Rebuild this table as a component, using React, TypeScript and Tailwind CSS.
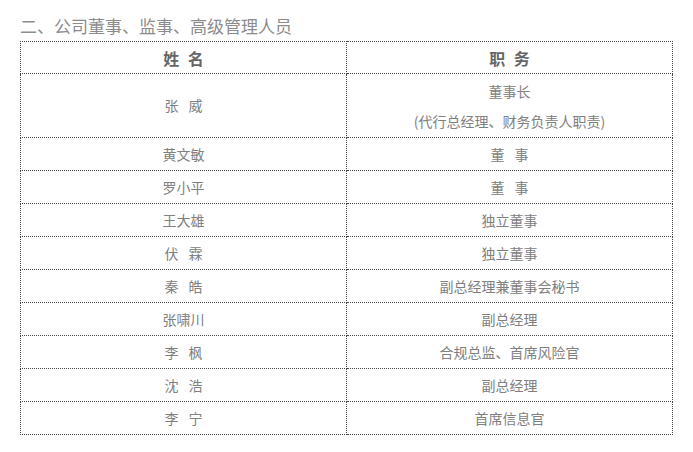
import React from "react";

const rows: [string, string][] = [
  ["黄文敏", "董 事"],
  ["罗小平", "董 事"],
  ["王大雄", "独立董事"],
  ["伏 霖", "独立董事"],
  ["秦 皓", "副总经理兼董事会秘书"],
  ["张啸川", "副总经理"],
  ["李 枫", "合规总监、首席风险官"],
  ["沈 浩", "副总经理"],
  ["李 宁", "首席信息官"],
];

const cell =
  "border border-dotted border-[#444] text-[14px] text-[#808080] p-0 whitespace-pre [word-spacing:7px]";

export default function App() {
  return (
    <div
      className="w-[693px] h-[452px] bg-white px-[20px] pt-[14px]"
      style={{ fontFamily: '"Noto Sans CJK SC", "Noto Sans", sans-serif' }}
    >
      <div className="text-[17px] leading-[24px] text-[#8c8c8c] mb-[3px]">
        二、公司董事、监事、高级管理人员
      </div>
      <table className="w-[652px] border-collapse table-fixed text-center">
        <tbody>
          <tr className="h-[32px]">
            <td className="w-[326px] border border-dotted border-[#444] text-[16px] font-bold text-[#666] p-0 leading-none [word-spacing:5px]">
              姓 名
            </td>
            <td className="w-[326px] border border-dotted border-[#444] text-[16px] font-bold text-[#666] p-0 leading-none [word-spacing:5px]">
              职 务
            </td>
          </tr>
          <tr className="h-[64px]">
            <td className={cell}>张 威</td>
            <td className={cell + " leading-[30px]"}>
              <div>董事长</div>
              <div className="[word-spacing:0px]">(代行总经理、财务负责人职责)</div>
            </td>
          </tr>
          {rows.map(([n, r], i) => (
            <tr key={i} className="h-[33px]">
              <td className={cell}>{n}</td>
              <td className={cell}>{r}</td>
            </tr>
          ))}
        </tbody>
      </table>
    </div>
  );
}
